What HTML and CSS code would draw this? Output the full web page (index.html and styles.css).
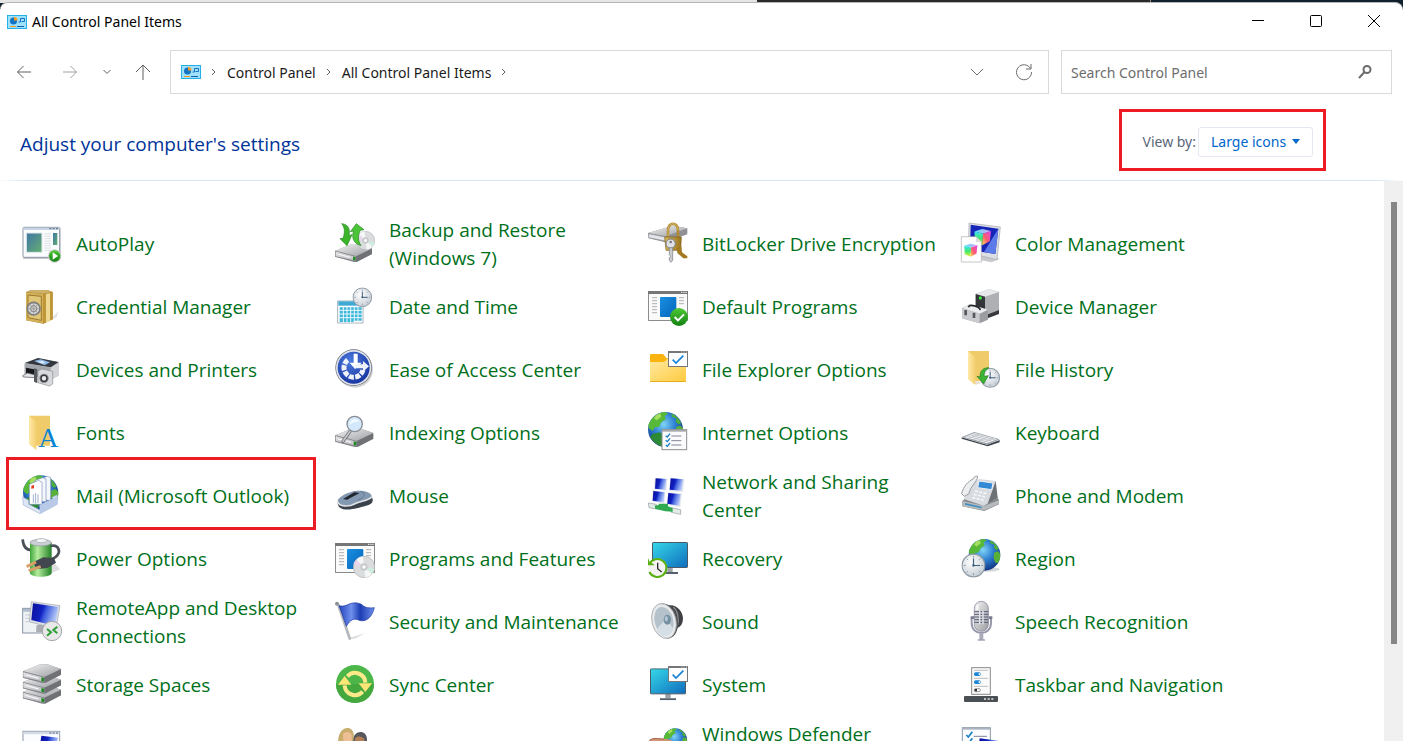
FILE: index.html
```html
<!DOCTYPE html>
<html lang="en">
<head>
    <meta charset="UTF-8">
    <meta name="viewport" content="width=device-width, initial-scale=1.0">
    <title>All Control Panel Items</title>
    <link rel="stylesheet" href="styles.css">
</head>
<body>
    <!-- Shared gradients and shapes for the icons -->
    <svg class="defs" aria-hidden="true">
        <defs>
            <linearGradient id="silver" x1="0" y1="0" x2="1" y2="1"><stop offset="0" stop-color="#f4f4f5"/><stop offset="1" stop-color="#9b9ca0"/></linearGradient>
            <linearGradient id="steel" x1="0" y1="0" x2="0" y2="1"><stop offset="0" stop-color="#f2f2f2"/><stop offset="1" stop-color="#b9babd"/></linearGradient>
            <linearGradient id="gold" x1="0" y1="0" x2="1" y2="0"><stop offset="0" stop-color="#d9b85c"/><stop offset="1" stop-color="#9a7420"/></linearGradient>
            <linearGradient id="folder" x1="0" y1="0" x2="1" y2="1"><stop offset="0" stop-color="#ffe9a2"/><stop offset="1" stop-color="#ffcb3e"/></linearGradient>
            <linearGradient id="oldFolder" x1="0" y1="0" x2="1" y2="0"><stop offset="0" stop-color="#ffe9a6"/><stop offset="1" stop-color="#f3cf70"/></linearGradient>
            <linearGradient id="blue" x1="0" y1="0" x2="1" y2="1"><stop offset="0" stop-color="#1a8fe3"/><stop offset="1" stop-color="#0465b8"/></linearGradient>
            <linearGradient id="cyan" x1="0" y1="0" x2="1" y2="1"><stop offset="0" stop-color="#35d8e8"/><stop offset="1" stop-color="#0f6cbd"/></linearGradient>
            <linearGradient id="screen" x1="0" y1="0" x2="1" y2=".3"><stop offset="0" stop-color="#0a0f98"/><stop offset=".45" stop-color="#1020c0"/><stop offset=".6" stop-color="#3f5ede"/><stop offset="1" stop-color="#b4c8f8"/></linearGradient>
            <linearGradient id="green" x1="0" y1="0" x2="0" y2="1"><stop offset="0" stop-color="#4fca35"/><stop offset="1" stop-color="#128012"/></linearGradient>
            <linearGradient id="photo" x1="0" y1="0" x2="1" y2="1"><stop offset="0" stop-color="#3f76a6"/><stop offset="1" stop-color="#64ae70"/></linearGradient>
            <linearGradient id="cubeLeft" x1="0" y1="0" x2="0" y2="1"><stop offset="0" stop-color="#3fe4f4"/><stop offset=".5" stop-color="#3fe86a"/><stop offset="1" stop-color="#f2f03c"/></linearGradient>
            <linearGradient id="cubeRight" x1="1" y1="0" x2="0" y2="1"><stop offset="0" stop-color="#e648f0"/><stop offset=".55" stop-color="#fb5a70"/><stop offset="1" stop-color="#fbe04a"/></linearGradient>
            <linearGradient id="cubeTop" x1="0" y1="0" x2="1" y2="0"><stop offset="0" stop-color="#59e2f6"/><stop offset="1" stop-color="#d9a4fa"/></linearGradient>
            <linearGradient id="battery" x1="0" y1="0" x2="1" y2="0"><stop offset="0" stop-color="#3fa53a"/><stop offset=".35" stop-color="#b4ec9c"/><stop offset="1" stop-color="#228026"/></linearGradient>
            <linearGradient id="flag" x1="0" y1="0" x2="1" y2="0"><stop offset="0" stop-color="#2444c0"/><stop offset=".35" stop-color="#6f90ec"/><stop offset=".6" stop-color="#1c3cb4"/><stop offset="1" stop-color="#6d90ea"/></linearGradient>
            <radialGradient id="sea" cx=".45" cy=".35" r=".65"><stop offset="0" stop-color="#7fd4f6"/><stop offset=".5" stop-color="#2e80d2"/><stop offset="1" stop-color="#123584"/></radialGradient>
            <radialGradient id="face" cx=".4" cy=".35" r=".7"><stop offset="0" stop-color="#ffffff"/><stop offset="1" stop-color="#c3ccd4"/></radialGradient>
            <radialGradient id="access" cx=".4" cy=".3" r=".7"><stop offset="0" stop-color="#4c7be0"/><stop offset="1" stop-color="#1a37a2"/></radialGradient>

            <symbol id="globe" viewBox="0 0 100 100">
                <circle cx="50" cy="50" r="49" fill="url(#sea)"/>
                <path d="M9 24C18 10 32 3 48 1l9 4-10 8 4 8-13 9-6 12-11 2-8 10-10-8-1-10z" fill="#58b938"/>
                <path d="M24 9l12-4 2 9-12 10-8-5z" fill="#a6df60"/>
                <path d="M66 5c13 5 22 14 28 27l-7 4-8-8 2-9-13-5z" fill="#4fae38"/>
                <path d="M80 43l12-4 7 8c1 10-2 20-6 27l-9 1-6-16z" fill="#58b038"/>
                <path d="M15 62l18-4 12 8 3 14-9 17C25 92 13 82 7 70z" fill="#2d8a34"/>
            </symbol>
            <symbol id="clock" viewBox="0 0 60 60">
                <circle cx="30" cy="30" r="28" fill="url(#face)" stroke="#8f9ba6" stroke-width="3"/>
                <path d="M30 6v5M30 49v5M6 30h5M49 30h5M13 13l3 3M44 44l3 3M47 13l-3 3M16 44l-3 3" stroke="#7d8994" stroke-width="2"/>
                <path d="M30 13v17h16" fill="none" stroke="#42607c" stroke-width="3"/>
                <circle cx="30" cy="30" r="3" fill="#42607c"/>
            </symbol>
            <symbol id="drive" viewBox="0 0 116 58">
                <path d="M1 22L52 1h22l41 14v17L68 57h-9L1 41z" fill="#85878b"/>
                <path d="M1 22L52 1h22l41 14-50 24z" fill="url(#silver)"/>
                <path d="M1 23l64 17v15L1 40z" fill="url(#steel)" stroke="#77797d" stroke-width="2"/>
                <path d="M7 29l42 11v6L7 35z" fill="#f8f8fb" stroke="#9d9da8"/>
                <path d="M56 40l8 2v11l-8-2z" fill="#1f8a22"/>
                <path d="M65 40l50-24v16L67 56z" fill="#6f7175"/>
            </symbol>
            <symbol id="window" viewBox="0 0 120 90">
                <rect x="1" y="1" width="118" height="88" rx="2" fill="#fafafa" stroke="#767676" stroke-width="3"/>
                <path d="M0 0h120v9H0z" fill="#767676"/>
                <path d="M99 4h4M106 4h4M112 4h4" stroke="#fff" stroke-width="3"/>
                <path d="M12 20h15M12 29h15M12 38h15M12 47h15M12 56h15M12 65h15M93 20h15M93 29h15M93 38h15" stroke="#8b8b8b" stroke-width="2"/>
                <rect x="36" y="18" width="49" height="60" rx="3" fill="url(#blue)"/>
            </symbol>
            <symbol id="card" viewBox="0 0 60 48">
                <rect x="1.500" y="1.500" width="57" height="45" fill="#fdfdfd" stroke="#767676" stroke-width="3"/>
                <path d="M0 0h60v6H0z" fill="#767676"/>
                <path d="M40 3h3M47 3h3M54 3h3" stroke="#fff" stroke-width="2"/>
                <path d="M14 26l10 10 22-22" fill="none" stroke="#1683d8" stroke-width="5"/>
            </symbol>
            <symbol id="disc" viewBox="0 0 66 66">
                <circle cx="33" cy="33" r="32" fill="#dadcdd" stroke="#aeb0b2" stroke-width="2"/>
                <path d="M33 33L10 11A32 32 0 0 1 30 1zM33 33l24 21a32 32 0 0 1-20 11z" fill="#f5f6f6"/>
                <path d="M33 33L2 25a32 32 0 0 1 6-12z" fill="#ecd3ee"/>
                <path d="M33 33l31 6a32 32 0 0 1-6 14z" fill="#cfeee0"/>
                <circle cx="33" cy="33" r="11" fill="#c6c8ca"/>
                <circle cx="33" cy="33" r="5" fill="#fff"/>
            </symbol>
            <symbol id="cube" viewBox="0 0 50 50">
                <path d="M2 10L24 3l24 5-22 8z" fill="url(#cubeTop)"/>
                <path d="M2 10l24 6-2 32L4 39z" fill="url(#cubeLeft)"/>
                <path d="M26 16l22-8-3 29-21 11z" fill="url(#cubeRight)"/>
            </symbol>
            <symbol id="monitor" viewBox="0 0 108 96">
                <path d="M46 76h16v14H46z" fill="#9aa1a8"/>
                <path d="M30 90h48v6H30z" fill="#55606b"/>
                <rect x="1.500" y="1.500" width="105" height="75" rx="2" fill="url(#cyan)" stroke="#4d5965" stroke-width="3"/>
            </symbol>
            <symbol id="cpanel" viewBox="0 0 20 14">
                <rect x=".5" y=".5" width="19" height="13" fill="#9fe0fb" stroke="#26b0e8"/>
                <circle cx="6.500" cy="6" r="3.500" fill="#1573c4"/>
                <path d="M7 5.500V2a3.500 3.500 0 0 1 3.500 3.500z" fill="#ff9a1f"/>
                <path d="M11.500 7h2V3.500h4v3h-3" fill="none" stroke="#1573c4"/>
                <path d="M3 11.500h6" stroke="#ff9a1f"/>
                <path d="M10 11.500h7" stroke="#0e5fb0"/>
            </symbol>
        </defs>
    </svg>

    <div class="desktop"><span class="desktop-light"></span><span class="desktop-dark"></span><span class="desktop-wall"></span></div>

    <div class="window">
        <header class="titlebar">
            <svg class="panel-icon"><use href="#cpanel"/></svg>
            <h1>All Control Panel Items</h1>
            <div class="window-buttons">
                <button type="button" aria-label="Minimize"><svg width="14" height="14" viewBox="0 0 14 14"><path d="M1 6.500h12"/></svg></button>
                <button type="button" aria-label="Maximize"><svg width="14" height="14" viewBox="0 0 14 14"><rect x="1.500" y="1.500" width="11" height="11" rx="1"/></svg></button>
                <button type="button" aria-label="Close"><svg width="14" height="14" viewBox="0 0 14 14"><path d="M1 1l12 12M13 1L1 13"/></svg></button>
            </div>
        </header>

        <nav class="toolbar">
            <div class="nav-buttons">
                <button type="button" class="back" aria-label="Back"><svg width="16" height="16" viewBox="0 0 16 16"><path d="M15 8H1.500M7.500 2l-6 6 6 6"/></svg></button>
                <button type="button" class="forward" aria-label="Forward"><svg width="16" height="16" viewBox="0 0 16 16"><path d="M1 8h13.500M8.500 2l6 6-6 6"/></svg></button>
                <button type="button" class="recent" aria-label="Recent locations"><svg width="10" height="8" viewBox="0 0 10 8"><path d="M1.500 2L5 5.500 8.500 2"/></svg></button>
                <button type="button" class="up" aria-label="Up"><svg width="18" height="18" viewBox="0 0 18 18"><path d="M9 17V2M2 9l7-7 7 7"/></svg></button>
            </div>
            <div class="address">
                <svg class="panel-icon"><use href="#cpanel"/></svg>
                <svg class="chevron" viewBox="0 0 8 10"><path d="M2 2l3 3-3 3"/></svg>
                <a href="#">Control Panel</a>
                <svg class="chevron" viewBox="0 0 8 10"><path d="M2 2l3 3-3 3"/></svg>
                <a href="#">All Control Panel Items</a>
                <svg class="chevron" viewBox="0 0 8 10"><path d="M2 2l3 3-3 3"/></svg>
                <div class="address-buttons">
                    <button type="button" aria-label="Previous locations"><svg width="14" height="8" viewBox="0 0 14 8"><path d="M1 1l6 6 6-6"/></svg></button>
                    <button type="button" aria-label="Refresh"><svg width="18" height="18" viewBox="0 0 18 18"><path d="M15.500 5.500A7.500 7.500 0 1 0 16.500 9M16 1v5h-5"/></svg></button>
                </div>
            </div>
            <form class="search">
                <input type="text" aria-label="Search Control Panel" placeholder="Search Control Panel">
                <button type="submit" aria-label="Search"><svg width="16" height="16" viewBox="0 0 16 16"><circle cx="10" cy="5.500" r="3.500"/><path d="M7.500 8L2 14"/></svg></button>
            </form>
        </nav>

        <section class="heading">
            <h2>Adjust your computer's settings</h2>
            <div class="view-by">
                <label for="view">View by:</label>
                <div class="select-wrap">
                    <select id="view">
                        <option>Large icons</option>
                        <option>Small icons</option>
                        <option>Category</option>
                    </select>
                    <svg class="arrow" viewBox="0 0 8 5"><path d="M0 0h8L4 5z"/></svg>
                </div>
            </div>
        </section>

        <div class="content">
            <main class="items">
                <a class="item" href="#">
                    <svg viewBox="0 0 120 120"><path d="M4 14h112v94H4z" fill="#c3c7cd"/><rect x="3" y="13" width="110" height="90" rx="3" fill="#fbfcfe" stroke="#8d97a6" stroke-width="3"/><path d="M4 14h108v7H4z" fill="#c9d6e8"/><path d="M82 17h6M92 17h6M102 17h6" stroke="#54647e" stroke-width="3"/><rect x="13" y="30" width="47" height="58" fill="url(#photo)" stroke="#e2e8ec" stroke-width="3"/><path d="M67 33h20M67 40h20M67 47h20M67 54h20M67 61h20M67 68h20M67 75h20M67 82h20" stroke="#cfd1d6" stroke-width="2"/><rect x="93" y="30" width="13" height="36" fill="url(#photo)"/><circle cx="98" cy="99" r="20" fill="#c9cbc9"/><circle cx="98" cy="99" r="17" fill="url(#green)"/><path d="M92 88l16 11-16 11z" fill="#fff"/></svg>
                    <span>AutoPlay</span>
                </a>
                <a class="item" href="#">
                    <svg viewBox="0 0 120 120"><use href="#drive" x="0" y="62" width="112" height="56"/><use href="#disc" x="63" y="24" width="57" height="57"/><path d="M20 2c20 2 26 16 22 36l9-3-15 33L15 47l9-1C30 28 30 14 20 2z" fill="#3cb52b" stroke="#23871d" stroke-width="2"/><path d="M78 68C52 60 50 40 56 24l-10 2L64 2l23 18-11 2c-8 16-8 30 2 46z" fill="#4cc437" stroke="#23871d" stroke-width="2"/></svg>
                    <span>Backup and Restore (Windows 7)</span>
                </a>
                <a class="item" href="#">
                    <svg viewBox="0 0 120 120"><path d="M0 30L74 8l44 8v18L52 58 2 46z" fill="#8f9093"/><path d="M0 30L74 8l44 8-64 24z" fill="url(#silver)"/><path d="M2 32l50 10v12L2 44z" fill="#e4e5ea" stroke="#8f9093" stroke-width="2"/><path d="M60 44V22c0-26 30-26 30 0v22" fill="none" stroke="#b08a34" stroke-width="8"/><path d="M60 40V22c0-26 30-26 30 0" fill="none" stroke="#e9cf83" stroke-width="2"/><path d="M50 42h50l-2 40H54z" fill="url(#gold)" stroke="#7d5d18" stroke-width="2"/><path d="M86 74l14-4 2 18 16 12v6h-12L88 90z" fill="#a37a22"/><circle cx="68" cy="62" r="14" fill="#dfe1e4" stroke="#77797d" stroke-width="3"/><circle cx="68" cy="57" r="4" fill="#77797d"/><path d="M64 74h10v38l-5 6-5-6v-8l4-4-4-5z" fill="#c9cbcf" stroke="#77797d" stroke-width="2"/></svg>
                    <span>BitLocker Drive Encryption</span>
                </a>
                <a class="item" href="#">
                    <svg viewBox="0 0 120 120"><path d="M62 88h36l4 14 14 6-24 10-32-6z" fill="#c9cace"/><path d="M24 0l94 12-10 98-86-20z" fill="#dcdfe4" stroke="#a4a8ae" stroke-width="2"/><path d="M29 5l83 12-9 76-76-12z" fill="#1624b8"/><path d="M112 17l-9 76-34-6z" fill="#5b7ce8"/><use href="#cube" x="38" y="15" width="54" height="54"/><path d="M1 41h44l16 16v60H1z" fill="#fff" stroke="#a9abb0" stroke-width="2"/><path d="M45 41v16h16z" fill="#dcdcdf"/><use href="#cube" x="8" y="60" width="43" height="43"/></svg>
                    <span>Color Management</span>
                </a>

                <a class="item" href="#">
                    <svg viewBox="0 0 120 120"><path d="M88 98l22-24-6 20-16 8z" fill="#e1e1e1"/><path d="M12 18l16-6h48l16 6v82l-28 13-52-10z" fill="#a67f2b"/><path d="M12 18l16-6h48l16 6-28 5z" fill="#cdb06a"/><path d="M12 19l52 5v88l-52-9z" fill="#d5b257"/><path d="M64 24l28-6v82l-28 13z" fill="#c09636"/><path d="M72 24l12-2v82l-12 6z" fill="#edd894"/><path d="M18 27l40 4v72l-40-8z" fill="#e0c676" stroke="#9b7830" stroke-width="3"/><circle cx="35" cy="68" r="19" fill="#d6d6d6" stroke="#7e7e7e" stroke-width="5"/><circle cx="35" cy="68" r="9" fill="#f0f0f0" stroke="#777" stroke-width="3"/><path d="M35 45v46M14 68h42M20 52l30 32M50 52L20 84" stroke="#8d8d8d" stroke-width="2"/></svg>
                    <span>Credential Manager</span>
                </a>
                <a class="item" href="#">
                    <svg viewBox="0 0 120 120"><path d="M8 45h76v66H8z" fill="#fff" stroke="#a3b4c0" stroke-width="3"/><path d="M10 46h72v13H10z" fill="#3ea9d2"/><path d="M14 64h66v40H56v4H14z" fill="#3db7da"/><path d="M25 62v48M36 62v48M47 62v48M58 62v48M69 62v48M12 73h70M12 84h70M12 95h70" stroke="#ecf9fd" stroke-width="3"/><use href="#clock" x="52" y="4" width="60" height="60"/></svg>
                    <span>Date and Time</span>
                </a>
                <a class="item" href="#">
                    <svg viewBox="0 0 120 120"><use href="#window" x="0" y="15" width="120" height="90"/><circle cx="93" cy="93" r="27" fill="url(#green)"/><path d="M80 93l10 10 18-18" fill="none" stroke="#fff" stroke-width="6"/></svg>
                    <span>Default Programs</span>
                </a>
                <a class="item" href="#">
                    <svg viewBox="0 0 120 120"><path d="M72 84l42-14v14L76 98z" fill="#38393c"/><path d="M44 24l40-15 30 9v54L74 88 44 74z" fill="#aeb0b3"/><path d="M44 24l40-15 30 9-42 14z" fill="#e7e8e9"/><path d="M44 24l28 8v52l-28-8z" fill="#333538"/><circle cx="58" cy="36" r="5" fill="#3be043"/><path d="M3 66l22-11 56 16v30l-25 11L3 97z" fill="#9b9da1"/><path d="M3 66l22-11 56 16-25 12z" fill="#ebecee"/><path d="M3 66l53 17v29L3 97z" fill="#c9cbcf"/><path d="M22 64c4-12 34-2 36 8" fill="none" stroke="#25272a" stroke-width="5"/><path d="M10 72h8v16h-8zM35 80h8v16h-8z" fill="#55585d"/></svg>
                    <span>Device Manager</span>
                </a>

                <a class="item" href="#">
                    <svg viewBox="0 0 120 120"><path d="M8 44l44-16 58 12v40L86 92 8 74z" fill="#b9bbbf"/><path d="M8 42l40-15 62 12-24 16z" fill="#34383e"/><path d="M36 36l20-5 28 9-16 9z" fill="#8fb8ea"/><path d="M46 38l14-3 10 5-8 4z" fill="#d6e8fb"/><path d="M8 43l78 13v36L8 76z" fill="#a3a6aa"/><path d="M86 56l24-15v38L86 92z" fill="#d2d4d7"/><path d="M12 56l32 6v16l-32-6z" fill="#17191c"/><path d="M2 80l14-8 24 6v8L4 84z" fill="#e3e4e6" stroke="#505257" stroke-width="2"/><path d="M36 58l10 3v42l-10-5z" fill="#55585d"/><path d="M48 66l12-6 32 7v38l-10 6-34-10z" fill="#d9dadd" stroke="#8a8c90" stroke-width="2"/><circle cx="66" cy="88" r="14" fill="#85888d"/><circle cx="66" cy="88" r="9" fill="#e9eaeb" stroke="#303236" stroke-width="4"/></svg>
                    <span>Devices and Printers</span>
                </a>
                <a class="item" href="#">
                    <svg viewBox="0 0 120 120"><ellipse cx="60" cy="62" rx="54" ry="54" fill="#d4d4d4"/><circle cx="56" cy="56" r="55" fill="#6a6f7b"/><circle cx="56" cy="56" r="53" fill="#dfe3ea"/><circle cx="56" cy="56" r="48" fill="url(#access)"/><path d="M38 33a29 29 0 1 0 46 30" fill="none" stroke="#eef2fa" stroke-width="15" stroke-dasharray="15 4"/><path d="M56 14h12v27h12L60 60 44 41h12z" fill="#fff"/><path d="M60 46h24v-10l18 16-18 16V58H60z" fill="#eef2fa"/></svg>
                    <span>Ease of Access Center</span>
                </a>
                <a class="item" href="#">
                    <svg viewBox="0 0 120 120"><path d="M6 18q0-3 3-3h34q3 0 5 3l7 9h56q3 0 3 3v20H6z" fill="#fbb40f"/><path d="M6 39h38q5 0 9-4l4-6h54q3 0 3 3v64q0 3-3 3H9q-3 0-3-3z" fill="url(#folder)"/><path d="M6 96q0 3 3 3h102q3 0 3-3z" fill="#e8ac1f"/><use href="#card" x="60" y="6" width="60" height="48"/></svg>
                    <span>File Explorer Options</span>
                </a>
                <a class="item" href="#">
                    <svg viewBox="0 0 120 120"><path d="M34 96l34 2-22 9z" fill="#e6e0d2"/><path d="M21 6h63v90H43z" fill="#f0cb69"/><path d="M21 6l22 18v84L21 91z" fill="url(#oldFolder)"/><use href="#clock" x="57" y="56" width="61" height="61"/><path d="M84 56C62 56 56 70 58 84l-10-2 20 22 14-24-12 2c-2-10 2-18 14-26z" fill="#3bb534" stroke="#227c1e" stroke-width="2"/></svg>
                    <span>File History</span>
                </a>

                <a class="item" href="#">
                    <svg viewBox="0 0 120 120"><path d="M21 11h63v90H43z" fill="#f0cb69"/><path d="M21 11l22 18v85L21 97z" fill="url(#oldFolder)"/><text x="49" y="106" class="font-letter">A</text></svg>
                    <span>Fonts</span>
                </a>
                <a class="item" href="#">
                    <svg viewBox="0 0 120 120"><use href="#drive" x="0" y="48" width="116" height="58"/><path d="M45 58L24 88" stroke="#6d6f74" stroke-width="10" stroke-linecap="round"/><path d="M45 58L24 88" stroke="#c7c9cd" stroke-width="5" stroke-linecap="round"/><circle cx="59" cy="36" r="23" fill="#d3e9fb" stroke="#8b8e94" stroke-width="4"/><path d="M44 38a16 16 0 0 1 30-8c-12-4-20 2-30 8z" fill="#f4fbff"/></svg>
                    <span>Indexing Options</span>
                </a>
                <a class="item" href="#">
                    <svg viewBox="0 0 120 120"><use href="#globe" x="-1" y="-1" width="107" height="107"/><rect x="42" y="53" width="74" height="60" fill="#fbfbfb" stroke="#8b8d90" stroke-width="3"/><path d="M42 53h74v6H42z" fill="#a7a9ac"/><path d="M70 72h30M70 86h30M70 99h30" stroke="#84849c" stroke-width="3"/><path d="M53 71l5 4 8-10M53 85l5 4 8-10M53 99l5 4 8-10" fill="none" stroke="#1b7fc4" stroke-width="4"/></svg>
                    <span>Internet Options</span>
                </a>
                <a class="item" href="#">
                    <svg viewBox="0 0 120 120"><path d="M2 76l76 22 38-14v7l-36 12L2 80z" fill="#3d4650"/><path d="M2 75l38-15 76 22-38 16z" fill="#9aa0a6"/><path d="M10 75l31-12 67 19-30 12z" fill="#f4f5f7"/><path d="M18 72l68 20M26 68l68 20M34 65l68 19M24 79l30-12M38 83l30-12M52 87l30-12M66 91l30-12" stroke="#aeb3b9" stroke-width="2"/></svg>
                    <span>Keyboard</span>
                </a>

                <a class="item marked" href="#">
                    <svg viewBox="0 0 120 120"><use href="#globe" x="2" y="0" width="108" height="108"/><path d="M54 12l22-8 10 4v68H54z" fill="#f4f7fc" stroke="#7d92b5" stroke-width="2"/><path d="M40 16l22-8 10 4v68H40z" fill="#f4f7fc" stroke="#7d92b5" stroke-width="2"/><path d="M22 28l28-12 10 6v66H22z" fill="#fff" stroke="#7d92b5" stroke-width="2"/><path d="M28 32l8-2v10l-8 1z" fill="#e8391d"/><path d="M34 58v26M41 54v32M48 58v26" stroke="#9fb2cf" stroke-width="3"/><path d="M2 66l18 10v12l32 16 16-10 24-16V66l14-6v28l-52 28L4 90z" fill="#dfe7f6" stroke="#9db0d0" stroke-width="2"/><path d="M52 90l54-26v24l-52 28z" fill="#b9c9e8"/></svg>
                    <span>Mail (Microsoft Outlook)</span>
                </a>
                <a class="item" href="#">
                    <svg viewBox="0 0 120 120"><path d="M8 84c0-12 26-30 54-36 26-2 48 10 51 24 2 16-12 18-34 24-26 8-70 16-71-12z" fill="#3a424c"/><path d="M8 78c0-10 26-26 54-30 24-2 44 4 48 14-6 14-32 14-52 24-18 8-50 8-50-8z" fill="#8399b1"/><path d="M8 80c4 16 34 16 52 6 18-8 42-10 50-20" fill="none" stroke="#e1e4e8" stroke-width="5"/><path d="M24 72l34-20 16 2-38 20z" fill="#22272e"/><path d="M76 50c20 4 14 16-8 26" fill="none" stroke="#566b82" stroke-width="2"/></svg>
                    <span>Mouse</span>
                </a>
                <a class="item" href="#">
                    <svg viewBox="0 0 120 120"><path d="M20 9l38 2-3 36-38-4z" fill="#e5e8ef"/><path d="M23 10l32 2-3 32-31-3z" fill="url(#screen)"/><path d="M67 9l43 4-5 38-42-3z" fill="#e5e8ef"/><path d="M68 10l37 3-4 34-36-3z" fill="url(#screen)"/><path d="M14 46l38 4-3 36-38-7z" fill="#e5e8ef"/><path d="M16 48l34 4-3 30-33-5z" fill="url(#screen)"/><path d="M60 51l42 4-5 42-41-8z" fill="#e5e8ef"/><path d="M61 54l37 4-4 34-36-6z" fill="url(#screen)"/><path d="M1 84l24 4v14L3 98z" fill="#e1ebe8" stroke="#8e9c98" stroke-width="2"/><path d="M70 98l28 6v14l-28-6z" fill="#e1ebe8" stroke="#8e9c98" stroke-width="2"/><path d="M20 92l12-2v-4h28v8l14 6v10l-22-1-30-7z" fill="#2faa50"/></svg>
                    <span>Network and Sharing Center</span>
                </a>
                <a class="item" href="#">
                    <svg viewBox="0 0 120 120"><path d="M4 78l24-22 68-12 18 32v12l-44 20L4 94z" fill="#85888c"/><path d="M4 78l66 14 44-16v10l-44 20L4 94z" fill="#b7babd"/><path d="M30 30l24-18 50 6 6 50-42 24-60-20z" fill="#d8dbdf"/><path d="M104 18l6 50-30 18z" fill="#6e7277"/><path d="M54 18l42 6-4 20-42-6z" fill="#3489d4" stroke="#eef1f4" stroke-width="3"/><path d="M42 48l36 8M38 58l36 8M34 68l36 8" stroke="#f5f6f7" stroke-width="5" stroke-dasharray="9 4"/><path d="M36 12c4-8 10-10 14-8 0 16-22 28-26 52L10 64 2 56C6 36 22 18 36 12z" fill="#eceef0" stroke="#989ca1" stroke-width="3"/><path d="M12 84l50 11v5L12 89z" fill="#3a8fc4"/></svg>
                    <span>Phone and Modem</span>
                </a>

                <a class="item" href="#">
                    <svg viewBox="0 0 120 120"><path d="M88 64l26 30-26 12z" fill="#dedede"/><path d="M2 4c2 26 14 32 26 32" fill="none" stroke="#4a5058" stroke-width="8"/><path d="M24 14v90c0 16 65 16 65 0V14z" fill="url(#battery)"/><ellipse cx="56" cy="14" rx="32" ry="10" fill="#c9cfd4" stroke="#8a9298" stroke-width="2"/><ellipse cx="58" cy="8" rx="16" ry="6" fill="#f4f6f7" stroke="#9aa2a8" stroke-width="2"/><path d="M86 24c24-6 30 16 20 28-8 10-16 10-24 16" fill="none" stroke="#4a5058" stroke-width="8"/><path d="M34 72l30-14 32 2 6 14-26 16-34 4z" fill="#42474f"/><path d="M14 86l28-14M20 98l36-12" stroke="#d9a06c" stroke-width="9"/></svg>
                    <span>Power Options</span>
                </a>
                <a class="item" href="#">
                    <svg viewBox="0 0 120 120"><use href="#window" x="0" y="15" width="120" height="90"/><use href="#disc" x="54" y="54" width="66" height="66"/></svg>
                    <span>Programs and Features</span>
                </a>
                <a class="item" href="#">
                    <svg viewBox="0 0 120 120"><use href="#monitor" x="12" y="12" width="108" height="96"/><circle cx="29" cy="90" r="29" fill="#f3f3f3"/><path d="M4 78a27 27 0 1 1 0 24" fill="none" stroke="#58b010" stroke-width="6"/><path d="M0 60v22h20l-7-6-7-2z" fill="#58b010"/><path d="M29 74v18l12 10" fill="none" stroke="#2c2c2c" stroke-width="4"/></svg>
                    <span>Recovery</span>
                </a>
                <a class="item" href="#">
                    <svg viewBox="0 0 120 120"><ellipse cx="78" cy="94" rx="38" ry="7" fill="#d3d6da"/><use href="#globe" x="22" y="2" width="97" height="97"/><use href="#clock" x="1" y="46" width="73" height="73"/></svg>
                    <span>Region</span>
                </a>

                <a class="item" href="#">
                    <svg viewBox="0 0 120 120"><rect x="2" y="22" width="76" height="74" fill="#eef2f5" stroke="#8794a4" stroke-width="3"/><path d="M3 24h76v8H3z" fill="#aebccd"/><path d="M10 42h30M10 52h30M10 62h30" stroke="#c5ccd4" stroke-width="3"/><path d="M44 72h30l4 24-36-4z" fill="#a9adb3"/><path d="M28 2l86 12-12 70-80-22z" fill="#dde1e6" stroke="#a0a5ac" stroke-width="2"/><path d="M33 7l76 11-10 57-71-18z" fill="url(#screen)"/><circle cx="90" cy="90" r="29" fill="#e8e8e8" stroke="#a4a5a6" stroke-width="3"/><path d="M75 84l12 10-12 10M106 77L94 87l12 10" fill="none" stroke="#2f9e35" stroke-width="6"/></svg>
                    <span>RemoteApp and Desktop Connections</span>
                </a>
                <a class="item" href="#">
                    <svg viewBox="0 0 120 120"><path d="M40 112l52-16-34 18z" fill="#dedede"/><path d="M6 10l36 106 6-2L12 8z" fill="#b8bbc0" stroke="#8a8d92"/><circle cx="6" cy="8" r="6" fill="#8d9095"/><path d="M12 14C34 20 44 2 66 6c22 2 14 18 52 14-8 34-30 46-50 36-18-6-26 8-34 20z" fill="url(#flag)" stroke="#1e369a" stroke-width="2"/></svg>
                    <span>Security and Maintenance</span>
                </a>
                <a class="item" href="#">
                    <svg viewBox="0 0 120 120"><path d="M56 14c30-8 49 18 49 38 0 14-5 24-15 28L64 96z" fill="#3e4043"/><path d="M76 18c14 12 18 36 12 58" fill="none" stroke="#8a8c8f" stroke-width="4"/><ellipse cx="52" cy="60" rx="37" ry="53" transform="rotate(-14 52 60)" fill="#55585c"/><ellipse cx="48" cy="60" rx="36" ry="53" transform="rotate(-14 48 60)" fill="#e8e9ea" stroke="#97999c" stroke-width="2"/><ellipse cx="48" cy="60" rx="28" ry="43" transform="rotate(-14 48 60)" fill="#b6c2cb"/><path d="M26 92c4-16 18-30 32-34l18 26c-12 26-36 28-50 8z" fill="#d6dfe5"/><ellipse cx="58" cy="56" rx="11" ry="15" fill="#7590a2"/><ellipse cx="55" cy="53" rx="5" ry="8" fill="#b2c5d2"/></svg>
                    <span>Sound</span>
                </a>
                <a class="item" href="#">
                    <svg viewBox="0 0 120 120"><path d="M32 50v16c0 40 58 40 58 0V50" fill="none" stroke="#9799ab" stroke-width="6"/><path d="M29 46h10v8H29zM84 46h10v8H84z" fill="#797b90"/><path d="M55 98h12v18H55z" fill="#a9abbb"/><path d="M50 117h22" stroke="#797b90" stroke-width="3"/><rect x="40" y="1" width="42" height="90" rx="21" fill="url(#silver)" stroke="#72748c" stroke-width="2"/><path d="M40 32h42M40 40h42M40 48h42M40 56h42M40 64h42" stroke="#5a5c76" stroke-width="3"/><path d="M56 30v40M66 30v40" stroke="#e6e7f0" stroke-width="4"/><path d="M52 8c-6 4-6 10-6 18h6z" fill="#fff"/></svg>
                    <span>Speech Recognition</span>
                </a>

                <a class="item" href="#">
                    <svg viewBox="0 0 120 120"><use href="#drive" x="2" y="62" width="116" height="58"/><use href="#drive" x="2" y="32" width="116" height="58"/><use href="#drive" x="2" y="0" width="116" height="58"/></svg>
                    <span>Storage Spaces</span>
                </a>
                <a class="item" href="#">
                    <svg viewBox="0 0 120 120"><circle cx="60" cy="60" r="57" fill="#4cb648"/><path d="M3 60a57 57 0 0 0 114 0z" fill="#44a83f"/><path d="M29 64a31 31 0 0 0 54 19M91 56a31 31 0 0 0-54-19" fill="none" stroke="#fbe98a" stroke-width="12"/><path d="M9 62l20-26 20 26zM71 58h40L91 84z" fill="#fde576"/></svg>
                    <span>Sync Center</span>
                </a>
                <a class="item" href="#">
                    <svg viewBox="0 0 120 120"><use href="#monitor" x="6" y="13" width="108" height="96"/><use href="#card" x="60" y="6" width="60" height="48"/></svg>
                    <span>System</span>
                </a>
                <a class="item" href="#">
                    <svg viewBox="0 0 120 120"><rect x="32" y="11" width="56" height="80" fill="#fafafa" stroke="#8b8b8b" stroke-width="3"/><path d="M39 19h42M39 43h42M39 67h42" stroke="#a3a3a3" stroke-width="2"/><rect x="39" y="25" width="20" height="11" rx="5" fill="#1b86d6"/><rect x="39" y="49" width="20" height="11" rx="5" fill="#1b86d6"/><rect x="40" y="74" width="18" height="9" rx="4" fill="#fff" stroke="#6d6d6d" stroke-width="2"/><path d="M53 28h4v5h-4zM53 52h4v5h-4z" fill="#fff"/><path d="M41 75h7v7h-7z" fill="#333"/><rect x="9" y="96" width="102" height="18" rx="3" fill="#4b5054"/><path d="M69 105h6M80 105h6M91 105h6" stroke="#e4e4e4" stroke-width="5"/></svg>
                    <span>Taskbar and Navigation</span>
                </a>

                <a class="item" href="#">
                    <svg viewBox="0 0 120 120"><rect x="3" y="13" width="110" height="90" fill="#fbfcfe" stroke="#8d97a6" stroke-width="3"/><path d="M4 14h108v8H4z" fill="#d3dbe6"/><path d="M82 18h6M92 18h6M102 18h6" stroke="#54647e" stroke-width="3"/><path d="M58 26l50 6-8 50-48-10z" fill="url(#screen)"/></svg>
                    <span>Troubleshooting</span>
                </a>
                <a class="item" href="#">
                    <svg viewBox="0 0 120 120"><path d="M54 46c-4-38 44-42 42-6v32H58z" fill="#56585c"/><path d="M60 34c8-8 20-8 28 2v30H60z" fill="#b57f56"/><path d="M10 56C2-10 62-10 56 30l-4 46H14z" fill="#c9ad6c"/><path d="M24 20c10-8 24-6 26 6v44H26z" fill="#eebf95"/></svg>
                    <span>User Accounts</span>
                </a>
                <a class="item" href="#">
                    <svg viewBox="0 0 120 120"><use href="#globe" x="46" y="3" width="72" height="72"/><path d="M4 40c14-10 30-4 44-4s24 2 28 10L40 58 6 60z" fill="#cf9474"/><path d="M4 40c14-10 30-4 44-4" fill="none" stroke="#9d5f44" stroke-width="3"/></svg>
                    <span>Windows Defender Firewall</span>
                </a>
                <a class="item" href="#">
                    <svg viewBox="0 0 120 120"><rect x="4" y="2" width="84" height="90" fill="#fbfcfe" stroke="#8d97a6" stroke-width="3"/><path d="M4 2h84v6H4z" fill="#aab4c2"/><path d="M38 28h40M38 48h20" stroke="#7d8596" stroke-width="3"/><path d="M16 24l6 6 12-16M16 44l6 6 12-16" fill="none" stroke="#1b7fc4" stroke-width="5"/><path d="M56 34l60 8-8 50-58-12z" fill="url(#screen)"/></svg>
                    <span>Windows Mobility Center</span>
                </a>
            </main>
            <div class="scrollbar"><div class="thumb"></div></div>
        </div>
    </div>
</body>
</html>
```
FILE: styles.css
```css
* {
    box-sizing: border-box;
}

body {
    font-family: "Noto Sans", "Open Sans", sans-serif;
    font-size: 14px;
    color: #1b1b1b;
    background-color: #10202c;
    margin: 0;
    height: 100vh;
    overflow: hidden;
    display: flex;
    flex-direction: column;
}

.defs {
    position: absolute;
    width: 0;
    height: 0;
}

button {
    display: flex;
    align-items: center;
    justify-content: center;
    padding: 0;
    border: none;
    background: none;
    color: inherit;
}

button svg,
.chevron {
    fill: none;
    stroke: currentColor;
}

a {
    color: inherit;
    text-decoration: none;
}

/* strip of desktop above the window */
.desktop {
    display: flex;
    height: 3px;
    flex-shrink: 0;
    margin-bottom: -1px;
}

.desktop-light {
    flex: 54;
    background-color: #e6e6e6;
}

.desktop-dark {
    flex: 28;
    background-color: #2b2a2a;
    border-right: 1px solid #8a8a8a;
}

.desktop-wall {
    flex: 18;
    background-color: #10202c;
}

.window {
    flex: 1;
    min-height: 0;
    display: flex;
    flex-direction: column;
    background-color: #fff;
    border-top: 1px solid #b5b5b5;
    border-radius: 8px 8px 0 0;
}

/* title bar */
.titlebar {
    display: flex;
    align-items: center;
    height: 37px;
    padding-left: 7px;
    flex-shrink: 0;
}

.titlebar h1 {
    margin: 0 auto 0 5px;
    font-size: 14px;
    font-weight: normal;
    color: #000;
}

.panel-icon {
    width: 20px;
    height: 14px;
    flex-shrink: 0;
}

.window-buttons {
    display: flex;
    color: #000;
}

.window-buttons button {
    width: 58px;
    height: 36px;
    padding: 0 1px 2px 0;
}

/* toolbar */
.toolbar {
    display: flex;
    height: 44px;
    margin: 10px 11px 0 4px;
    flex-shrink: 0;
}

.nav-buttons {
    display: flex;
    align-items: center;
    width: 166px;
    color: #5f5f5f;
}

.nav-buttons button {
    height: 40px;
}

.back {
    width: 40px;
}

.nav-buttons .forward {
    width: 52px;
    color: #a0a0a0;
}

.recent {
    width: 22px;
}

.up {
    width: 50px;
}

.address,
.search {
    display: flex;
    align-items: center;
    border: 1px solid #d9d9d9;
}

.address {
    flex: 1;
    gap: 9px;
    margin-right: 12px;
    padding: 0 10px;
}

.chevron {
    width: 8px;
    height: 10px;
    color: #5f5f5f;
}

.address-buttons {
    display: flex;
    margin-left: auto;
    color: #6b6b6b;
}

.address-buttons button {
    width: 47px;
    height: 40px;
}

.address-buttons button:last-child {
    margin-right: -9px;
}

.search {
    width: 331px;
}

.search input {
    flex: 1;
    min-width: 0;
    height: 40px;
    border: none;
    outline: none;
    padding: 0 9px;
    font: inherit;
}

.search input::placeholder {
    color: #6d6d6d;
    opacity: 1;
}

.search button {
    width: 52px;
    height: 40px;
    color: #6b6b6b;
}

.search svg {
    stroke-width: 2;
}

/* heading with view selector */
.heading {
    display: flex;
    align-items: center;
    justify-content: space-between;
    height: 87px;
    padding: 6px 77px 0 20px;
    flex-shrink: 0;
    border-bottom: 1px solid;
    border-image: linear-gradient(to right, #fff, #d5e5f5 2%, #d5e5f5 98%, #fff) 1;
}

.heading h2 {
    margin: 0;
    padding-top: 8px;
    font-family: "Open Sans", "Noto Sans", sans-serif;
    font-size: 19px;
    font-weight: normal;
    color: #003399;
}

.view-by {
    display: flex;
    align-items: center;
    justify-content: flex-end;
    gap: 2px;
    width: 207px;
    height: 62px;
    margin-bottom: 1px;
    padding: 4px 10px 0 0;
    border: 3px solid #ed1c24;
    color: #5a6779;
}

.select-wrap {
    position: relative;
}

.select-wrap select {
    appearance: none;
    width: 115px;
    height: 30px;
    padding: 0 12px;
    border: 1px solid #e3e8f2;
    border-radius: 3px;
    background-color: #fff;
    color: #0066cc;
    font: inherit;
}

.arrow {
    position: absolute;
    top: 12px;
    right: 13px;
    width: 8px;
    height: 5px;
    fill: #0066cc;
    pointer-events: none;
}

/* item list */
.content {
    flex: 1;
    min-height: 0;
    display: flex;
}

.items {
    flex: 1;
    display: grid;
    grid-template-columns: repeat(auto-fill, 313px);
    grid-auto-rows: 63px;
    align-content: start;
    padding: 31px 0 0 22px;
    overflow: hidden;
}

.item {
    position: relative;
    display: flex;
    align-items: center;
    gap: 14px;
    padding-right: 16px;
    font-family: "Open Sans", "Noto Sans", sans-serif;
    font-size: 19px;
    line-height: 28px;
    color: #00701a;
}

.item span {
    max-width: 240px;
}

.item svg {
    width: 40px;
    height: 40px;
    margin-bottom: 2px;
    flex-shrink: 0;
    overflow: visible;
}

.item .font-letter {
    font-family: "Liberation Serif", serif;
    font-size: 84px;
    fill: #0a84d0;
}

.marked::after {
    content: "";
    position: absolute;
    top: -7px;
    left: -16px;
    box-sizing: border-box;
    width: 310px;
    height: 73px;
    border: 3px solid #ed1c24;
}

/* scrollbar */
.scrollbar {
    width: 19px;
    padding: 21px 6px 97px 7px;
    background-color: #f0f0f0;
}

.thumb {
    height: 100%;
    background-color: #868686;
}
```
